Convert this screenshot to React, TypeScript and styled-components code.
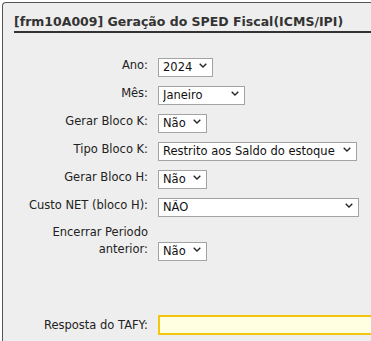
import React, { useState } from 'react';
import styled, { createGlobalStyle } from 'styled-components';

interface fieldInt {
  label: string;
  value: string;
  options: string[];
  width: number;
}

const FIELDS: fieldInt[] = [
  { label: 'Ano:', value: '2024', options: ['2023', '2024', '2025'], width: 55 },
  { label: 'Mês:', value: 'Janeiro', options: ['Janeiro', 'Fevereiro', 'Março'], width: 87 },
  { label: 'Gerar Bloco K:', value: 'Não', options: ['Sim', 'Não'], width: 49 },
  {
    label: 'Tipo Bloco K:',
    value: 'Restrito aos Saldo do estoque',
    options: ['Restrito aos Saldo do estoque', 'Completo'],
    width: 199,
  },
  { label: 'Gerar Bloco H:', value: 'Não', options: ['Sim', 'Não'], width: 49 },
  { label: 'Custo NET (bloco H):', value: 'NÃO', options: ['SIM', 'NÃO'], width: 201 },
  { label: 'Encerrar Periodo anterior:', value: 'Não', options: ['Sim', 'Não'], width: 49 },
];

const App: React.FC = () => {
  const [values, setValues] = useState<string[]>(FIELDS.map((f) => f.value));
  const [resposta, setResposta] = useState<string>('');

  const handleChange = (idx: number, value: string) => {
    const next = [...values];
    next[idx] = value;
    setValues(next);
  };

  return (
    <>
      <GlobalStyle />
      <Panel>
        <Title>[frm10A009] Geração do SPED Fiscal(ICMS/IPI)</Title>
        <Form>
          {FIELDS.map((field, idx) => (
            <React.Fragment key={field.label}>
              <Label>{field.label}</Label>
              <SelectWrap $width={field.width}>
                <Select value={values[idx]} onChange={(e) => handleChange(idx, e.target.value)}>
                  {field.options.map((opt) => (
                    <option key={opt}>{opt}</option>
                  ))}
                </Select>
                <Chevron width="8" height="5" viewBox="0 0 8 5">
                  <path d="M0.7 0.7 L4 4 L7.3 0.7" fill="none" stroke="#222" strokeWidth="1.3" />
                </Chevron>
              </SelectWrap>
            </React.Fragment>
          ))}
          <Spacer />
          <Label>Resposta do TAFY:</Label>
          <Resposta value={resposta} onChange={(e) => setResposta(e.target.value)} />
        </Form>
      </Panel>
    </>
  );
};

export default App;

const GlobalStyle = createGlobalStyle`
  body {
    margin: 0;
    background: #ffffff;
    overflow: hidden;
    font-family: "DejaVu Sans", Verdana, sans-serif;
  }
`;

const Panel = styled.div`
  margin: 2px 0 0 2px;
  width: calc(100vw - 2px);
  height: calc(100vh - 2px);
  background: #eeeeee;
  border: 1px solid #555555;
  border-right: none;
  border-bottom: none;
  border-radius: 4px 0 0 0;
  box-sizing: border-box;
  padding-top: 10px;
  overflow: hidden;
`;

const Title = styled.div`
  margin-left: 11px;
  height: 18px;
  font-size: 12.5px;
  font-weight: bold;
  line-height: 18px;
  color: #333333;
  border-bottom: 2px solid #333333;
  white-space: nowrap;
`;

const Form = styled.div`
  display: grid;
  grid-template-columns: 120px 1fr;
  column-gap: 10px;
  row-gap: 9px;
  align-items: end;
  margin-top: 23px;
  padding-left: 25px;
`;

const Label = styled.div`
  font-size: 11.5px;
  line-height: 17px;
  color: #222222;
  text-align: right;
  padding-bottom: 1px;
`;

const SelectWrap = styled.div<{ $width: number }>`
  position: relative;
  width: ${(p) => p.$width}px;
  height: 19px;
`;

const Select = styled.select`
  appearance: none;
  width: 100%;
  height: 19px;
  margin: 0;
  padding: 0 16px 0 4px;
  border: 1px solid #a3a3a3;
  border-radius: 0;
  background: #ffffff;
  font-family: "DejaVu Sans", Verdana, sans-serif;
  font-size: 11.5px;
  color: #111111;
  outline: none;
`;

const Chevron = styled.svg`
  position: absolute;
  right: 6px;
  top: 7px;
  pointer-events: none;
`;

const Spacer = styled.div`
  grid-column: 1 / -1;
  height: 38px;
`;

const Resposta = styled.input`
  width: 100%;
  height: 20px;
  margin: 0;
  box-sizing: border-box;
  border: 2px solid #f5c60e;
  border-right: none;
  background: #ffffe2;
  outline: none;
  font-family: "DejaVu Sans", Verdana, sans-serif;
  font-size: 11.5px;
`;
